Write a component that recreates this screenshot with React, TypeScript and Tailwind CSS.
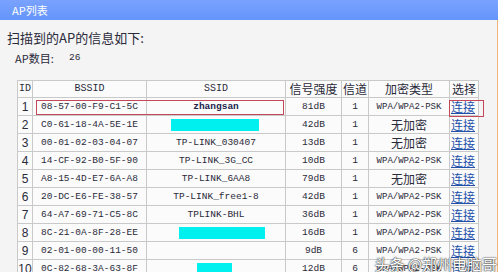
import React from "react";

const rows = [
  { id: 1, bssid: "08-57-00-F9-C1-5C", ssid: "zhangsan", sig: "81dB", ch: "1", enc: "WPA/WPA2-PSK" },
  { id: 2, bssid: "C0-61-18-4A-5E-1E", ssid: "", bar: [24, 88], sig: "42dB", ch: "1", enc: "无加密" },
  { id: 3, bssid: "00-01-02-03-04-07", ssid: "TP-LINK_030407", sig: "13dB", ch: "1", enc: "无加密" },
  { id: 4, bssid: "14-CF-92-B0-5F-90", ssid: "TP-LINK_3G_CC", sig: "10dB", ch: "1", enc: "WPA/WPA2-PSK" },
  { id: 5, bssid: "A8-15-4D-E7-6A-A8", ssid: "TP-LINK_6AA8", sig: "79dB", ch: "1", enc: "无加密" },
  { id: 6, bssid: "20-DC-E6-FE-38-57", ssid: "TP-LINK_free1-8", sig: "42dB", ch: "1", enc: "WPA/WPA2-PSK" },
  { id: 7, bssid: "64-A7-69-71-C5-8C", ssid: "TPLINK-BHL", sig: "36dB", ch: "1", enc: "WPA/WPA2-PSK" },
  { id: 8, bssid: "8C-21-0A-8F-28-EE", ssid: "", bar: [32, 86], sig: "16dB", ch: "1", enc: "WPA/WPA2-PSK" },
  { id: 9, bssid: "02-01-00-00-11-50", ssid: "", sig: "9dB", ch: "6", enc: "WPA/WPA2-PSK" },
  { id: 10, bssid: "0C-82-68-3A-63-8F", ssid: "", bar: [50, 35], sig: "12dB", ch: "6", enc: "WPA/WPA2-PSK" },
];

const mono = "font-['Liberation_Mono','DejaVu_Sans_Mono',monospace] text-[9.5px]";
const cjk = "font-['Noto_Sans_CJK_SC',sans-serif] text-[12px]";
const cell = "border border-[#c9c9c9] h-[18px] p-0 leading-[14px] text-center align-middle overflow-hidden";

export default function App() {
  return (
    <div className="relative w-[498px] h-[272px] overflow-hidden bg-[#f4f4f4] text-[#2a2a3a]">
      <div className="h-[20px] bg-gradient-to-b from-[#7aa2ff] to-[#6495fb] pl-[12px] flex items-center">
        <span className="text-white text-[11px] font-['Noto_Sans_CJK_SC',sans-serif] leading-none">AP列表</span>
      </div>
      <div className="border-r border-[#f2b47c] h-[252px]">
        <div className="pl-[7px] pt-[10px] text-[13px] leading-[16px] font-['Noto_Sans_CJK_SC',sans-serif]">
          扫描到的AP的信息如下:
        </div>
        <div className="pl-[15px] pt-[5px] flex text-[11px] leading-[14px] font-['Noto_Sans_CJK_SC',sans-serif]">
          <span className="w-[54px]">AP数目:</span>
          <span className={mono}>26</span>
        </div>

        <table className="ml-[17px] mt-[15px] table-fixed border-collapse bg-[#fbfbfb] w-[461px]">
          <colgroup>
            <col className="w-[15px]" />
            <col className="w-[114px]" />
            <col className="w-[139px]" />
            <col className="w-[56px]" />
            <col className="w-[27px]" />
            <col className="w-[81px]" />
            <col className="w-[29px]" />
          </colgroup>
          <thead>
            <tr className="h-[17px]">
              <th className={`${cell} !h-[17px] font-normal ${mono} text-[10px]`}>ID</th>
              <th className={`${cell} !h-[17px] font-normal ${mono} text-[10px]`}>BSSID</th>
              <th className={`${cell} !h-[17px] font-normal ${mono} text-[10px]`}>SSID</th>
              <th className={`${cell} !h-[17px] font-normal ${cjk}`}>信号强度</th>
              <th className={`${cell} !h-[17px] font-normal ${cjk}`}>信道</th>
              <th className={`${cell} !h-[17px] font-normal ${cjk}`}>加密类型</th>
              <th className={`${cell} !h-[17px] font-normal ${cjk}`}>选择</th>
            </tr>
          </thead>
          <tbody>
            {rows.map((r) => (
              <tr key={r.id} className="h-[18px]">
                <td className={`${cell} text-[12px] font-['Liberation_Sans',sans-serif]`}>{r.id}</td>
                <td className={`${cell} ${mono}`}>{r.bssid}</td>
                <td className={`${cell} ${mono}`}>
                  {r.id === 1 ? (
                    <span className="font-bold text-[#23234a]">{r.ssid}</span>
                  ) : r.bar ? (
                    <div className="flex h-[12px]">
                      <div style={{ width: r.bar[0] }} />
                      <div className="bg-[#00f0f0] h-full" style={{ width: r.bar[1] }} />
                    </div>
                  ) : (
                    r.ssid
                  )}
                </td>
                <td className={`${cell} ${mono}`}>{r.sig}</td>
                <td className={`${cell} ${mono}`}>{r.ch}</td>
                <td className={`${cell} ${r.enc === "无加密" ? cjk : `${mono} text-[9px]`}`}>{r.enc}</td>
                <td className={`${cell} ${cjk} text-left pl-[1px]`}>
                  <a className="text-[#2250a8] underline">连接</a>
                </td>
              </tr>
            ))}
          </tbody>
        </table>
      </div>

      <div className="absolute left-[36px] top-[100px] w-[248px] h-[15px] border border-[#c4485a]" />
      <div className="absolute left-[449px] top-[100px] w-[35px] h-[17px] border border-[#c4485a]" />

      <div className="absolute right-[1px] bottom-[1px] text-white text-[15px] leading-none font-['Noto_Sans_CJK_SC',sans-serif] [text-shadow:0_0_2px_#333,0_0_1px_#000]">
        头条 @郑州电脑哥
      </div>
    </div>
  );
}
